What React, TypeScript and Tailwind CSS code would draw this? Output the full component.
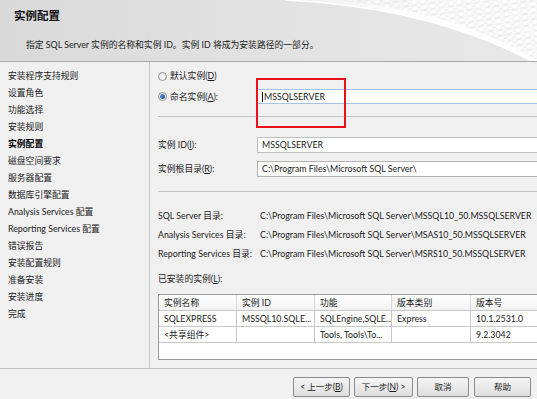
import React from "react";

const steps = [
  "安装程序支持规则",
  "设置角色",
  "功能选择",
  "安装规则",
  "实例配置",
  "磁盘空间要求",
  "服务器配置",
  "数据库引擎配置",
  "Analysis Services 配置",
  "Reporting Services 配置",
  "错误报告",
  "安装配置规则",
  "准备安装",
  "安装进度",
  "完成",
];

const dirs = [
  ["SQL Server 目录:", "C:\\Program Files\\Microsoft SQL Server\\MSSQL10_50.MSSQLSERVER"],
  ["Analysis Services 目录:", "C:\\Program Files\\Microsoft SQL Server\\MSAS10_50.MSSQLSERVER"],
  ["Reporting Services 目录:", "C:\\Program Files\\Microsoft SQL Server\\MSRS10_50.MSSQLSERVER"],
];

const cols = [
  { title: "实例名称", w: "w-[78px]" },
  { title: "实例 ID", w: "w-[78px]" },
  { title: "功能", w: "w-[77px]" },
  { title: "版本类别", w: "w-[79px]" },
  { title: "版本号", w: "w-[90px]" },
];

const rows = [
  ["SQLEXPRESS", "MSSQL10.SQLE...", "SQLEngine,SQLE...", "Express", "10.1.2531.0"],
  ["<共享组件>", "", "Tools, Tools\\To...", "", "9.2.3042"],
];

function Radio({ checked }: { checked?: boolean }) {
  return (
    <span className="flex h-[9px] w-[9px] items-center justify-center rounded-full border border-[#8f8f8f] bg-gradient-to-br from-[#e6e6e6] to-white">
      {checked && <span className="h-[5px] w-[5px] rounded-full bg-gradient-to-br from-[#5a9be0] to-[#1c4f9c]" />}
    </span>
  );
}

function Btn({ children }: { children: React.ReactNode }) {
  return (
    <div className="flex h-[20px] items-center justify-center rounded-[2px] border border-[#8b8b8b] bg-gradient-to-b from-[#f6f6f6] to-[#dddddd] text-[8.5px] text-[#1a1a1a]">
      {children}
    </div>
  );
}

function HeaderArt() {
  return (
    <svg className="absolute inset-0" width="537" height="61" viewBox="0 0 537 61">
      <defs>
        <pattern id="lat" width="9" height="6" patternUnits="userSpaceOnUse" patternTransform="rotate(-8)">
          <path d="M0 0 L9 6 M9 0 L0 6 M0 3 L9 3" stroke="#dedede" strokeWidth="0.6" fill="none" />
        </pattern>
        <linearGradient id="wh" x1="0" y1="0" x2="1" y2="0">
          <stop offset="0" stopColor="#ffffff" stopOpacity="0.4" />
          <stop offset="0.5" stopColor="#ffffff" stopOpacity="0.95" />
          <stop offset="1" stopColor="#ffffff" stopOpacity="1" />
        </linearGradient>
      </defs>
      <path d="M285 0 C370 4 460 22 537 64 L537 0 Z" fill="url(#wh)" />
      <path d="M330 0 C410 6 480 26 537 60 L537 0 Z" fill="url(#lat)" opacity="0.9" />
      <path d="M285 0 C370 4 460 22 537 64" stroke="#ffffff" strokeWidth="1.5" fill="none" />
    </svg>
  );
}

export default function App() {
  return (
    <div className="flex h-[399px] w-[537px] flex-col overflow-hidden bg-[#f0f0f0] font-['Lato','Noto_Sans_CJK_SC',sans-serif] text-[8.5px] text-[#1a1a1a]">
      {/* header */}
      <div className="relative h-[62px] shrink-0 border-b border-[#a9a9a9] bg-gradient-to-r from-[#d9d9d9] via-[#e2e2e2] to-[#e8e8e8]">
        <HeaderArt />
        <div className="relative pl-[14px] pt-[8px] text-[11.5px] font-bold leading-[16px] text-[#111]">实例配置</div>
        <div className="relative pl-[26px] pt-[15px] text-[8.8px] leading-[12px] text-[#222]">
          指定 SQL Server 实例的名称和实例 ID。实例 ID 将成为安装路径的一部分。
        </div>
      </div>

      {/* body */}
      <div className="flex h-[307px] shrink-0 border-b border-[#bdbdbd]">
        <div className="w-[150px] shrink-0 border-r border-[#c8c8c8] pl-[8px] pt-[5px] text-[8.8px]">
          {steps.map((s) => (
            <div key={s} className={`flex h-[17px] items-center ${s === "实例配置" ? "font-bold text-black" : ""}`}>
              {s}
            </div>
          ))}
        </div>

        <div className="relative flex flex-1 flex-col pl-[8px] pt-[6px] text-[8.8px]">
          {/* red highlight box */}
          <div className="absolute left-[106px] top-[16px] h-[50px] w-[90px] border-2 border-[#e8101a]" />

          <div className="flex h-[16px] items-center gap-[3px]">
            <Radio />
            <span>
              默认实例(<u>D</u>)
            </span>
          </div>
          <div className="mt-[5px] flex h-[15px] items-center">
            <div className="flex w-[99px] items-center gap-[3px]">
              <Radio checked />
              <span>
                命名实例(<u>A</u>):
              </span>
            </div>
            <div className="flex h-[15px] flex-1 items-center border border-[#a6c5e6] bg-white pl-[4px]">
              <span className="mr-[1px] h-[10px] w-px bg-black" />
              MSSQLSERVER
            </div>
          </div>
          <div className="mt-[12px] h-px bg-[#c4c4c4]" />

          <div className="mt-[20px] flex h-[16px] items-center">
            <div className="w-[99px]">
              实例 ID(<u>I</u>):
            </div>
            <div className="flex h-[16px] flex-1 items-center border border-[#c0c0c0] bg-white pl-[4px]">MSSQLSERVER</div>
          </div>
          <div className="mt-[8px] flex h-[16px] items-center">
            <div className="w-[99px]">
              实例根目录(<u>R</u>):
            </div>
            <div className="flex h-[16px] flex-1 items-center border border-[#b4b4b4] bg-white pl-[4px]">
              C:\Program Files\Microsoft SQL Server\
            </div>
            <div className="ml-[4px] flex h-[17px] w-[15px] items-center justify-center rounded-[2px] border border-[#8b8b8b] bg-gradient-to-b from-[#f6f6f6] to-[#dcdcdc] text-[7px] leading-none">
              ...
            </div>
          </div>
          <div className="mt-[14px] h-px bg-[#c4c4c4]" />

          <div className="mt-[14px] flex flex-col">
            {dirs.map(([k, v]) => (
              <div key={k} className="flex h-[19px] items-center">
                <div className="w-[102px] shrink-0">{k}</div>
                <div className="whitespace-nowrap">{v}</div>
              </div>
            ))}
          </div>

          <div className="mt-[9px] flex h-[14px] items-center">
            已安装的实例(<u>L</u>):
          </div>

          <div className="mt-[8px] h-[66px] w-[400px] border border-[#9a9a9a] bg-white">
            <div className="flex h-[16px] border-b border-[#c8c8c8] bg-gradient-to-b from-white to-[#f1f1f1]">
              {cols.map((c) => (
                <div key={c.title} className={`${c.w} flex shrink-0 items-center border-r border-[#d5d5d5] pl-[5px]`}>
                  {c.title}
                </div>
              ))}
            </div>
            {rows.map((r, i) => (
              <div key={i} className="flex h-[16px] border-b border-[#c8c8c8]">
                {r.map((cell, j) => (
                  <div
                    key={j}
                    className={`${cols[j].w} flex shrink-0 items-center overflow-hidden whitespace-nowrap border-r border-[#c8c8c8] pl-[5px]`}
                  >
                    {cell}
                  </div>
                ))}
              </div>
            ))}
          </div>
        </div>
      </div>

      {/* footer */}
      <div className="flex flex-1 items-start pt-[8px]">
        <div className="ml-[293px] flex gap-[4px]">
          <div className="w-[57px]">
            <Btn>
              &lt; 上一步(<u>B</u>)
            </Btn>
          </div>
          <div className="w-[59px]">
            <Btn>
              下一步(<u>N</u>) &gt;
            </Btn>
          </div>
          <div className="w-[52px]">
            <Btn>取消</Btn>
          </div>
          <div className="ml-[1px] w-[57px]">
            <Btn>帮助</Btn>
          </div>
        </div>
      </div>
    </div>
  );
}
